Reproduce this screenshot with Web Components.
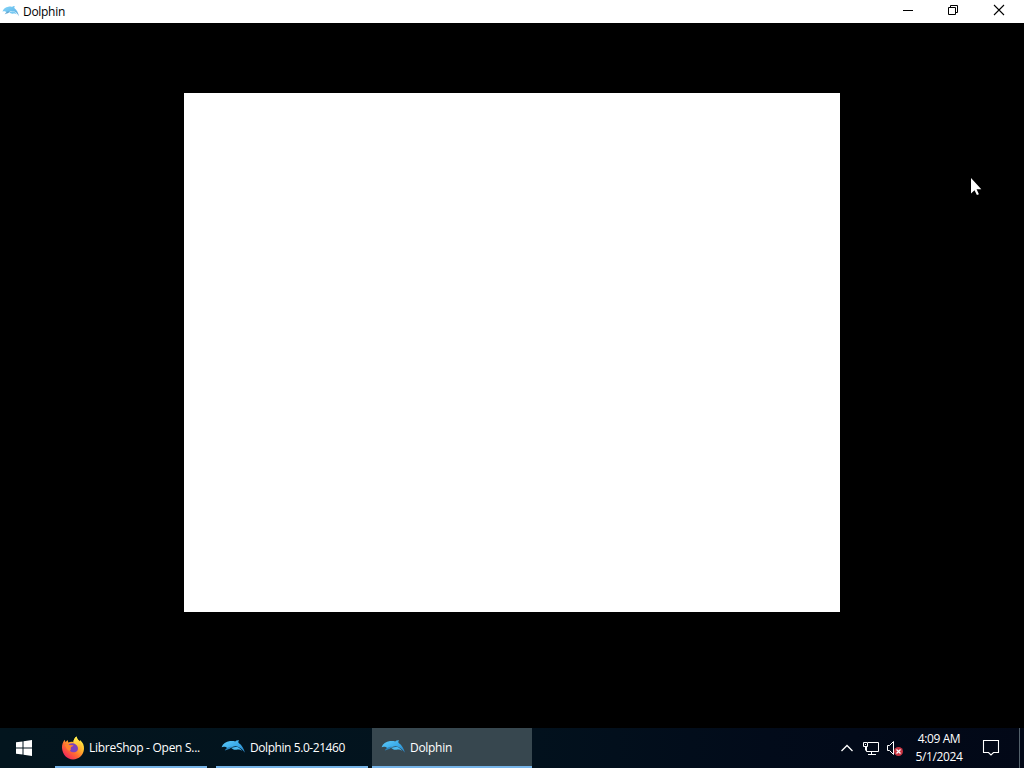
<!DOCTYPE html>
<html lang="en">
<head>
<meta charset="utf-8">
<title>Dolphin</title>
<style>
	html, body{
	  margin: 0;
	  height: 100%;
	  overflow: hidden;
	  background: #000;
	}
	body{
	  font: 12px/16px "Open Sans", "Noto Sans", sans-serif;
	}
</style>
</head>
<body>
<desk-top>
	<app-window caption="Dolphin"><game-view></game-view></app-window>
	<task-bar slot="bar">
		<task-button class="first" label="LibreShop - Open S..." spacing="-0.28px"><fox-icon></fox-icon></task-button>
		<task-button label="Dolphin 5.0-21460" spacing="-0.43px"><dolphin-icon></dolphin-icon></task-button>
		<task-button class="active" label="Dolphin" spacing="-0.3px"><dolphin-icon></dolphin-icon></task-button>
		<system-tray slot="tray" time="4:09 AM" date="5/1/2024"></system-tray>
	</task-bar>
	<mouse-pointer slot="pointer"></mouse-pointer>
</desk-top>

<script>
(function(){
/**
 *  define a custom element from a template string.
 *  {{name}} in the template is replaced by the attribute of that name.
**/
function define(name_, html_){
	customElements.define(name_, class extends HTMLElement{
		constructor(){
			super();
			var self = this;
			var templateEle = document.createElement('template');
			templateEle.innerHTML = html_.replace(/{{(\w+)}}/g, function(m_, attr_){
				return self.getAttribute(attr_) || '';
			});
			this.attachShadow({mode: 'open'}).appendChild(templateEle.content.cloneNode(true));
		}
	});
}

define('dolphin-icon', `
	<style>
		:host{ display: block; width: 24px; height: 16px; }
		svg{ display: block; width: 100%; height: 100%; }
	</style>
	<svg viewBox="0 0 24 16" preserveAspectRatio="none">
		<defs>
			<linearGradient id="g" x1="0" y1="0" x2="1" y2="1">
				<stop offset="0" stop-color="#5fcaf8"/>
				<stop offset=".55" stop-color="#38a9e8"/>
				<stop offset="1" stop-color="#2b80bf"/>
			</linearGradient>
		</defs>
		<path fill="url(#g)" d="M.6 8.300C1.800 4.800 5 2.500 9 2.100c2-.2 3.800-.1 5.200.3.900-.8 2.100-1.200 3.900-1-.8.700-1 1.600-.4 2.600 3.200 2.200 5.200 5.600 6.200 9.800-2-3-4.400-5.200-7.300-6.100-2.800-.9-5 .1-7 1.200-1.700.9-3.600.6-4.700-.8C3 7.500 1.600 7.800.6 8.300z"/>
		<path fill="#2a86c0" d="M3.800 11.600c.9-1.900 2.500-2.900 4.700-3.600l2.200-.4c-.8 1.400-1.900 2.300-3.900 2.900-1 .3-2 .5-3 1.100z"/>
		<path fill="#49b8ef" d="M10 8.700c2.400-.2 4-1.100 6-1 2.300.8 3.900 2.200 5 4.200-2.200-1.700-3.800-1.500-5.500-1.200-2.300.3-4-.5-5.500-2z"/>
	</svg>
`);

define('fox-icon', `
	<style>
		:host{ display: block; width: 24px; height: 24px; padding: 1px 0 0 1px; margin-right: -1px; }
		svg{ display: block; }
	</style>
	<svg width="24" height="24" viewBox="0 0 24 24">
		<defs>
			<linearGradient id="body" x1=".85" y1=".1" x2=".2" y2=".9">
				<stop offset="0" stop-color="#fff044"/>
				<stop offset=".35" stop-color="#ffb52c"/>
				<stop offset=".65" stop-color="#ff6b32"/>
				<stop offset="1" stop-color="#f32a58"/>
			</linearGradient>
			<linearGradient id="tail" x1="0" y1="0" x2="0" y2="1">
				<stop offset="0" stop-color="#fff34f"/>
				<stop offset="1" stop-color="#ff9a25"/>
			</linearGradient>
		</defs>
		<path fill="url(#body)" d="M1 12C.8 8.600 1.900 6 3.700 3.700l.8 2.500 2-2.200.9 2.500c2-.8 3.500-.8 5-.3.2-2.300 1.200-4.400 3.200-5.700.2 2.200 1.500 3.500 2.900 4.900L19 4c2.900 2.300 4.300 5.600 4 9.100-.5 6-5.100 10.400-11 10.400S1.400 18.400 1 12z"/>
		<path fill="#7c43bd" d="M7.800 8.300c3.400-2 7.600-1.100 8.900 2.700 1.100 3.700-1.600 5.500-4.700 5.200-3.300-.2-5.200-3.200-4.200-7.900z"/>
		<path fill="#ff832e" d="M3.500 9c1.900-1.200 3.600-.9 4.900.1l3.900.2c.5 1-1.700 1.300-2.200 1.700-.3.700-.5 1.500-.3 2.300-.2 1.400-1.100 1.900-2.200 1.200C5.500 13.500 5.300 11 3.500 9z"/>
		<path fill="url(#tail)" d="M12.400 6.200c.2-2.300 1.200-4.400 3.200-5.700.2 3.100 4.600 5 5.100 9.100.4 3.700-1 6.200-2.500 7.300.8-3.200-.1-6.100-2.100-7.500-1.600-1.200-2.600-2.200-3.700-3.200z"/>
	</svg>
`);

define('app-window', `
	<style>
		:host{ display: flex; flex-direction: column; flex: 1; min-height: 0; }
		header{
		  display: flex;
		  align-items: center;
		  height: 23px;
		  background: #fff;
		  color: #000;
		}
		dolphin-icon{ width: 17px; height: 13px; margin: 0 3px 0 2px; opacity: .75; }
		.caption{ flex: 1; padding: 1px 0 0 1px; letter-spacing: -.3px; }
		svg{ display: block; margin-bottom: 2px; }
		main{ flex: 1; display: flex; justify-content: center; }
	</style>
	<header>
		<dolphin-icon></dolphin-icon>
		<span class="caption">{{caption}}</span>
		<svg width="138" height="21" fill="none" stroke="#000">
			<path d="M17 10.500h10M62.500 7.500h7v7h-7zM64.500 7v-1.500h7v7H70"/>
			<path d="M108 5l10 10M118 5l-10 10" stroke-width="1.100"/>
		</svg>
	</header>
	<main><slot></slot></main>
`);

// the blank frame of the running game.
define('game-view', `
	<style>
		:host{ display: block; width: 656px; height: 519px; margin-top: 70px; background: #fff; }
	</style>
`);

define('task-button', `
	<style>
		:host{
		  display: flex;
		  align-items: center;
		  box-sizing: border-box;
		  width: 152px;
		  height: 40px;
		  margin-right: 4px;
		  padding-left: 5px;
		  border-bottom: 2px solid #76b4e8;
		  color: #fff;
		}
		:host(.first){ margin-right: 9px; }
		:host(.active){ width: 160px; padding-left: 9px; background: #37474f; }
		span{ margin: 2px 0 0 5px; white-space: nowrap; letter-spacing: {{spacing}}; }
	</style>
	<slot></slot>
	<span>{{label}}</span>
`);

define('system-tray', `
	<style>
		:host{ display: flex; align-items: center; height: 40px; color: #fff; }
		svg{ display: block; }
		.clock{ width: 68px; text-align: center; line-height: 18px; padding-bottom: 1px; letter-spacing: -.4px; }
		.clock div{ white-space: nowrap; }
		.peek{ width: 1px; height: 40px; margin: 0 4px 0 14px; background: #53616b; }
	</style>
	<svg width="70" height="40" fill="none" stroke="#fff">
		<path d="M6.500 23l5.500-5.500 5.500 5.500" stroke-width="1.300"/>
		<path d="M33 14.500h10.500v9H31.500V19M36.500 24v3M33 26.500h8"/>
		<path d="M28.500 14.500h4v4h-4zM30.500 18.500v4M30 16.500h1"/>
		<path d="M52.500 17.500h2l4-4v13l-4-4h-2z"/>
		<circle cx="63.500" cy="23.500" r="4.500" fill="#c83543" stroke="none"/>
		<path d="M61.500 21.500l4 4M65.500 21.500l-4 4" stroke-width="1.200"/>
	</svg>
	<div class="clock"><div>{{time}}</div><div>{{date}}</div></div>
	<svg width="32" height="40" fill="none" stroke="#fff" stroke-width="1.100">
		<path d="M10.500 12.500h15v12h-5l-2.500 2.500-2.500-2.500h-5z"/>
	</svg>
	<div class="peek"></div>
`);

define('task-bar', `
	<style>
		:host{
		  display: flex;
		  height: 40px;
		  background: linear-gradient(90deg, #03151e, #02131e 45%, #020b1a 75%, #020817);
		}
		.start{ display: block; width: 55px; height: 40px; }
		nav{ display: flex; flex: 1; }
	</style>
	<svg class="start" fill="#fff">
		<path d="M16 14.300l6.500-.9v6.100H16zM23.500 13.200l8.500-1.200v7.500h-8.500zM16 20.500h6.500v6.100l-6.500-.9zM23.500 20.500H32V28l-8.500-1.200z"/>
	</svg>
	<nav><slot></slot></nav>
	<slot name="tray"></slot>
`);

// floats over the window, so it is the one element out of the flow.
define('mouse-pointer', `
	<style>
		:host{ position: absolute; left: 970px; top: 177px; }
		svg{ display: block; }
	</style>
	<svg width="13" height="20">
		<path fill="#fff" d="M1 1v15.500l3.500-3.300 2.400 4.900 2-.9-2.300-4.900h4.700z"/>
	</svg>
`);

define('desk-top', `
	<style>
		:host{ display: flex; flex-direction: column; position: relative; height: 100vh; background: #000; }
	</style>
	<slot></slot>
	<slot name="bar"></slot>
	<slot name="pointer"></slot>
`);
})();
</script>
</body>
</html>
